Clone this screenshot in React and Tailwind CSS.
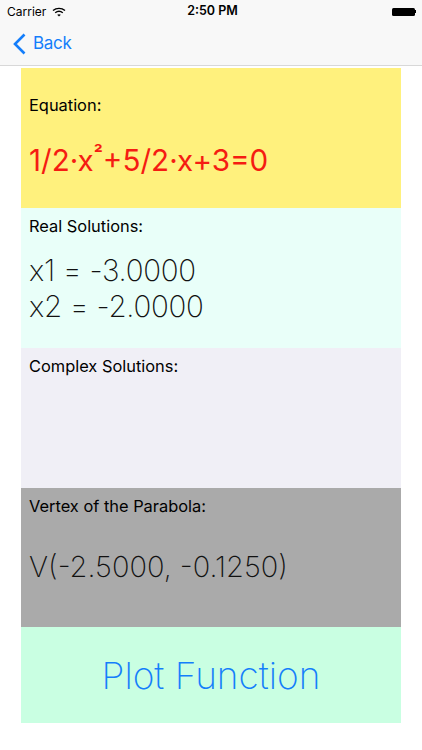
import React from "react";

const Section = ({ bg, height, labelClass, label, children }) => (
  <div className={`${bg} ${height} flex flex-col pl-[8px]`}>
    <p className={`${labelClass} text-[16.4px] leading-5 text-black`}>{label}</p>
    {children}
  </div>
);

const StatusBar = () => (
  <div className="relative flex h-[22px] items-center justify-between pl-[7px] pr-[6px] pt-[1px]">
    <div className="flex items-center gap-[6px]">
      <span className="text-[12px] leading-none text-black">Carrier</span>
      <svg width="14" height="10" viewBox="0 0 14 10" fill="none" stroke="#000" strokeWidth="1.4">
        <path d="M1 3.6C4.4.6 9.6.6 13 3.6" />
        <path d="M3.2 5.8C5.4 4 8.6 4 10.8 5.8" />
        <path d="M7 9.6 5.2 7.8c1-.8 2.6-.8 3.6 0Z" fill="#000" stroke="none" />
      </svg>
    </div>
    <span className="absolute left-[3px] right-0 top-[5px] text-center text-[12.5px] font-semibold leading-none text-black">2:50 PM</span>
    <div className="flex items-center">
      <div className="h-[8px] w-[23px] rounded-[1.5px] bg-black" />
      <div className="h-[3px] w-[1px] bg-black" />
    </div>
  </div>
);

export default function App() {
  return (
    <div className="flex h-[750px] w-[422px] flex-col overflow-hidden bg-white font-['Inter','Liberation_Sans',sans-serif]">
      <div className="h-[66px] border-b border-[#d8d8d8] bg-[#f8f8f8]">
        <StatusBar />
        <div className="flex h-[43px] items-center gap-[7px] pl-[13px]">
          <svg width="13" height="22" viewBox="0 0 13 22" fill="none" stroke="#147efb" strokeWidth="2.6">
            <path d="M11.5 1.5 2 11l9.5 9.5" />
          </svg>
          <span className="text-[17px] leading-none tracking-[-0.3px] text-[#147efb]">Back</span>
        </div>
      </div>

      <div className="mx-[21px] mt-[2px] flex flex-col">
        <Section bg="bg-[#fff17d]" height="h-[140px]" labelClass="mt-[27px]" label="Equation:">
          <p className="mt-[27px] text-[29.6px] leading-9 text-[#f51c12]">
            1/2·x<sup className="text-[20px] font-semibold leading-none">²</sup>+5/2·x+3=0
          </p>
        </Section>
        <Section bg="bg-[#e9fff9]" height="h-[140px]" labelClass="mt-2" label="Real Solutions:">
          <p className="mt-[16px] text-[29.5px] font-extralight leading-9 tracking-[-0.3px] text-[#111]">
            x1 = -3.0000
            <br />
            x2 = -2.0000
          </p>
        </Section>
        <Section bg="bg-[#f0eff6]" height="h-[140px]" labelClass="mt-2" label="Complex Solutions:" />
        <Section bg="bg-[#aaaaaa]" height="h-[139px]" labelClass="mt-2" label="Vertex of the Parabola:">
          <p className="mt-[35px] text-[29px] font-extralight leading-8 text-[#111]">V(-2.5000, -0.1250)</p>
        </Section>
        <button className="flex h-[96px] items-center justify-center bg-[#c9ffe2] pt-[1px] text-[37px] font-extralight text-[#147efb]">
          Plot Function
        </button>
      </div>
    </div>
  );
}
